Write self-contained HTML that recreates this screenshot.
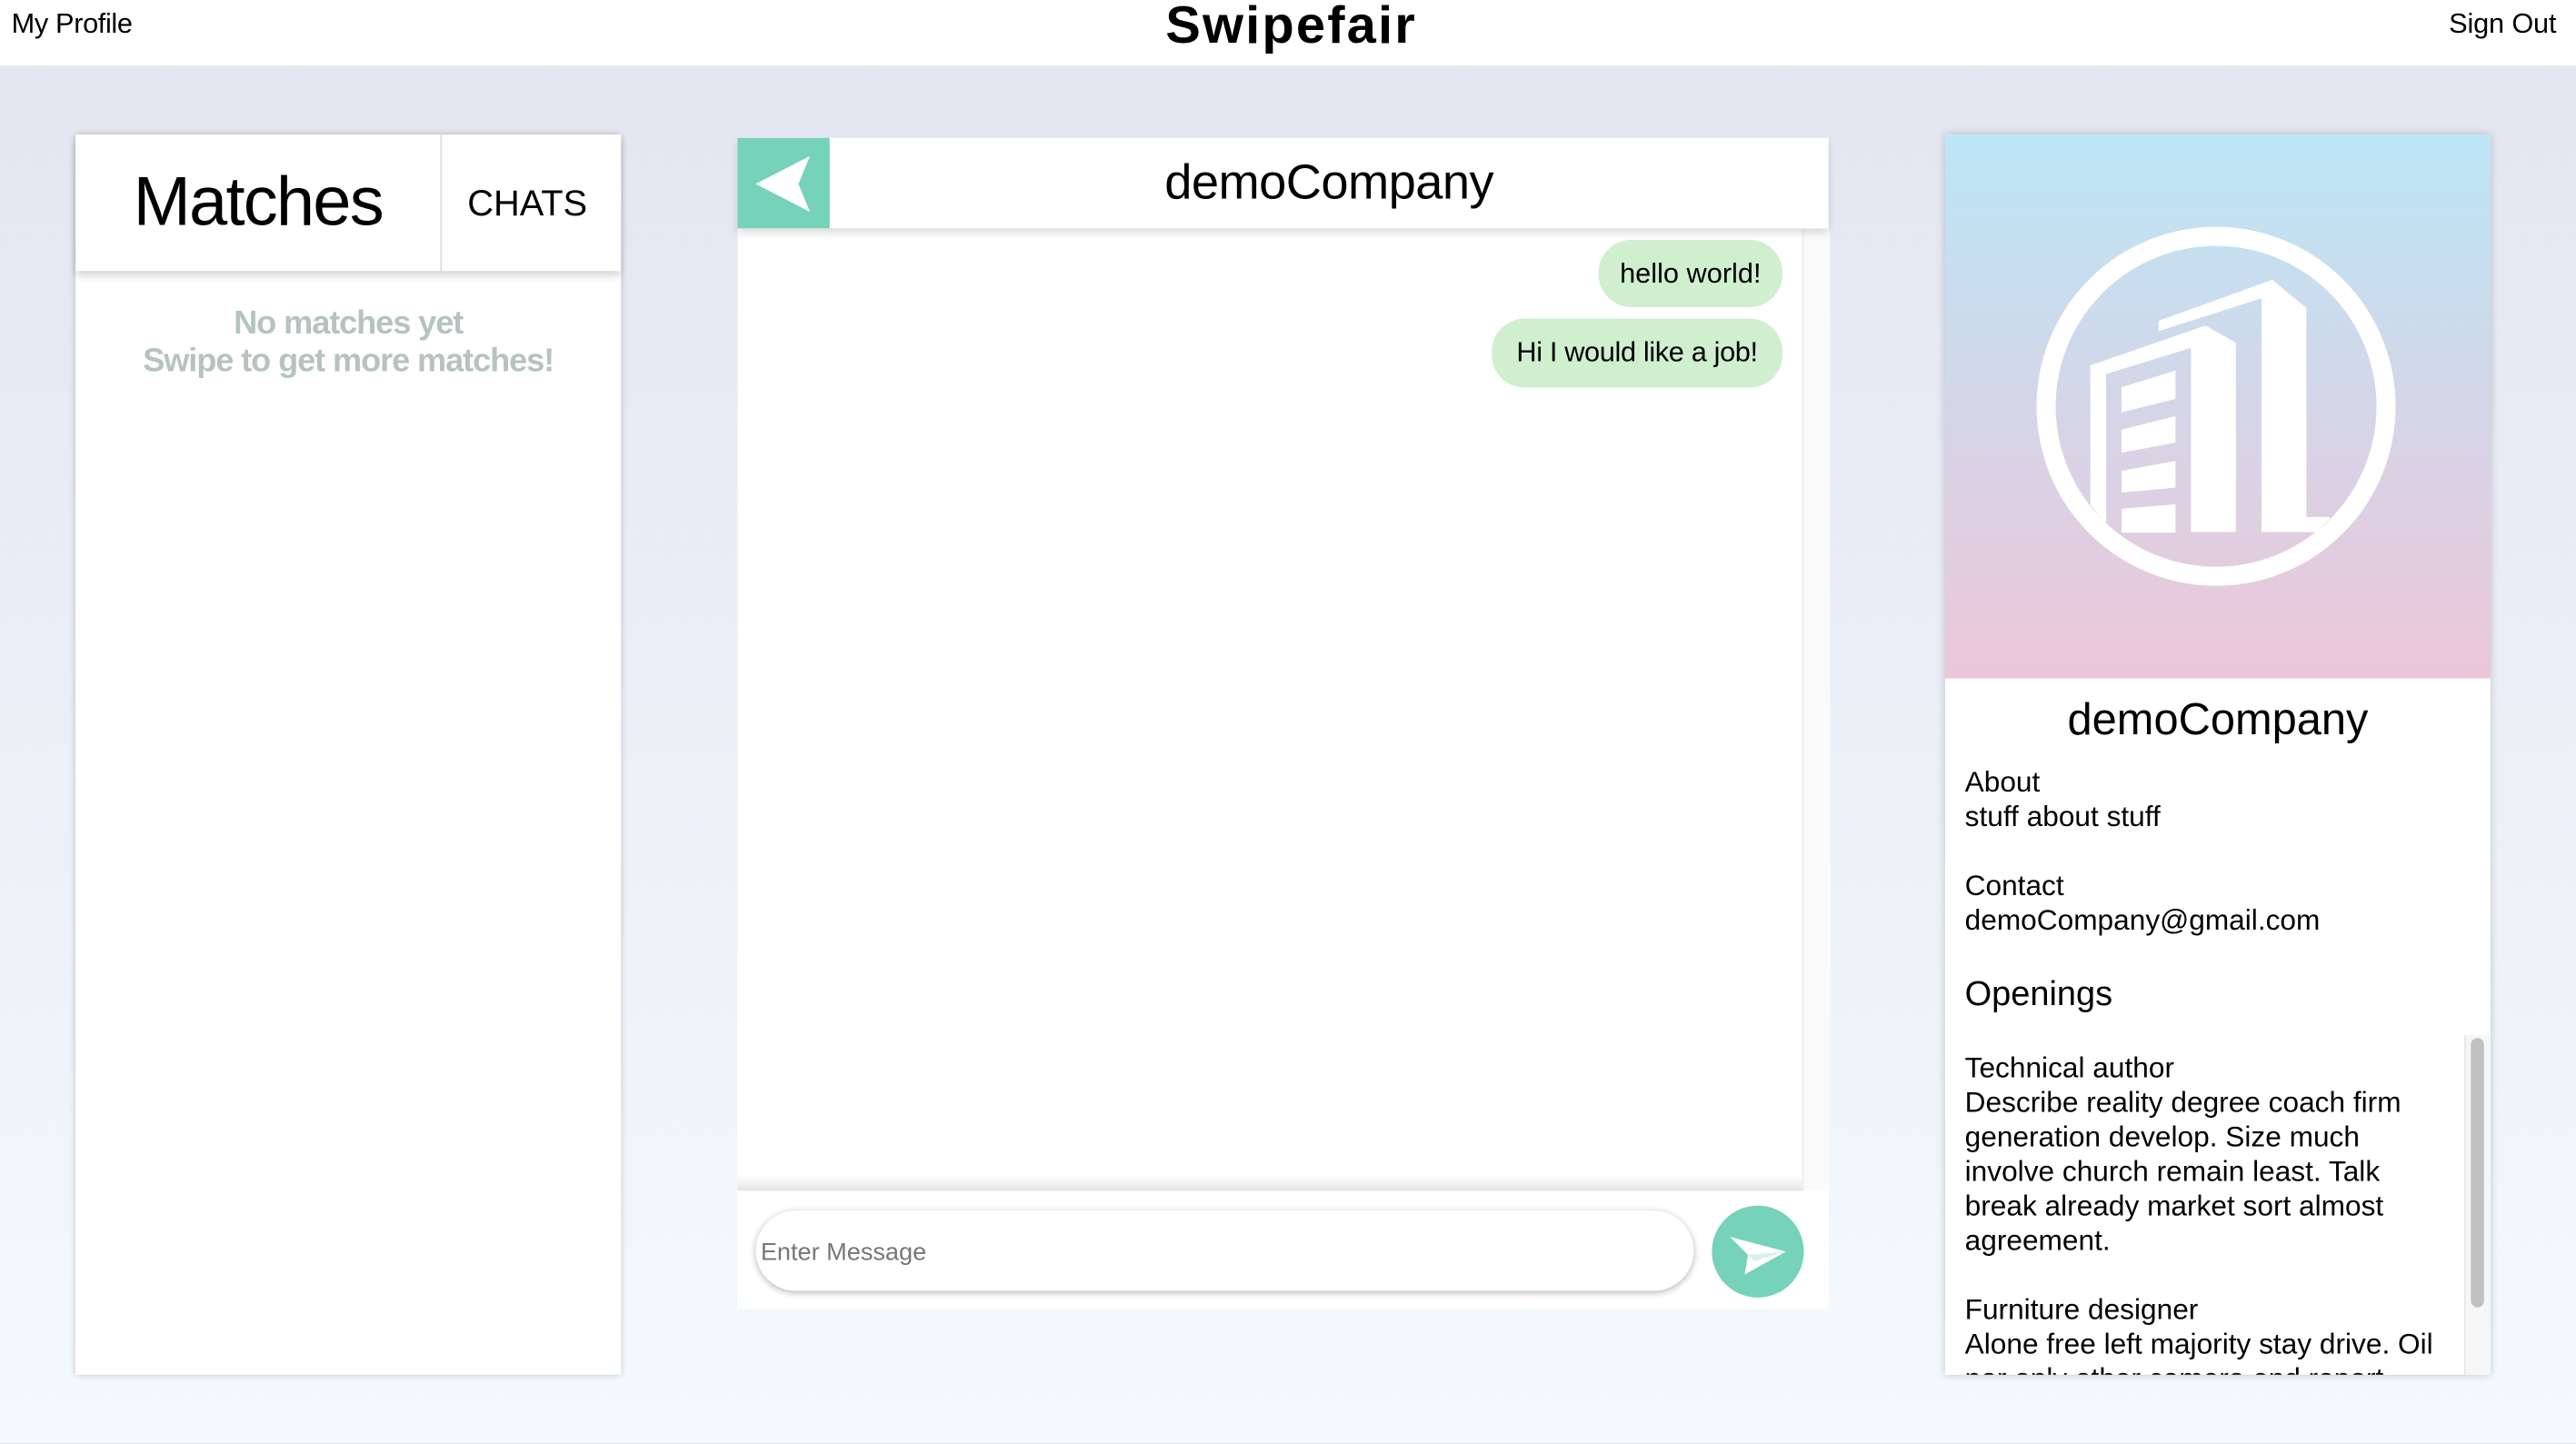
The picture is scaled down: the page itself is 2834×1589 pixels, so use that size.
<!DOCTYPE html>
<html><head><meta charset="utf-8"><style>
html,body{margin:0;padding:0;width:2834px;height:1588px;overflow:hidden;}
body{background:linear-gradient(#e3e4f0 0%,#f3fafd 100%);font-family:"Liberation Sans",sans-serif;}
#s{position:absolute;left:0;top:0;width:1568px;height:879px;transform:scale(1.80740);transform-origin:0 0;}
.a{position:absolute;}
.t{position:absolute;white-space:nowrap;}
</style></head><body><div id="s">
<div class="a" style="left:0;top:0;width:1568px;height:40px;background:#fff"></div>
<div class="t" style="left:7px;top:5px;font-size:17px;letter-spacing:-0.2px">My Profile</div>
<div class="t" style="left:0;width:1572px;text-align:center;top:-3px;font-size:32px;font-weight:900;letter-spacing:1.2px">Swipefair</div>
<div class="t" style="right:12px;top:5px;font-size:17px;letter-spacing:-0.1px">Sign Out</div>

<!-- left panel -->
<div class="a" style="left:46px;top:82px;width:332px;height:755px;background:#fff;box-shadow:0 0 4px rgba(0,0,0,.2)"></div>
<div class="a" style="left:46px;top:82px;width:332px;height:83px;background:#fff;box-shadow:0 3px 5px rgba(0,0,0,.18)"></div>
<div class="a" style="left:268px;top:82px;width:1px;height:83px;background:#ddd"></div>
<div class="t" style="left:46px;width:222px;text-align:center;top:99px;font-size:42px;letter-spacing:-1px">Matches</div>
<div class="t" style="left:268px;width:106px;text-align:center;top:111px;font-size:22px">CHATS</div>
<div class="t" style="left:46px;width:332px;text-align:center;top:186px;font-size:20px;line-height:23px;color:#b5c4bd;font-weight:bold;letter-spacing:-0.6px">No matches yet<br>Swipe to get more matches!</div>

<!-- chat panel -->
<div class="a" style="left:449px;top:84px;width:664px;height:713px;background:#fff"></div>
<div class="a" style="left:1097px;top:140px;width:16px;height:585px;background:#fafafa;border-left:1px solid #eee"></div>
<div class="a" style="left:449px;top:84px;width:664px;height:55px;background:#fff;box-shadow:0 3px 5px rgba(0,0,0,.15)"></div>
<div class="a" style="left:449px;top:84px;width:56px;height:55px;background:#76d3b9"></div>
<svg class="a" style="left:449px;top:84px" width="56" height="55"><polygon points="11,28 44,11 37,28 44,45" fill="#fff"/></svg>
<div class="t" style="left:505px;width:608px;text-align:center;top:95px;font-size:30px;letter-spacing:-0.3px">demoCompany</div>
<div class="t" style="left:973px;top:146px;width:112px;height:41px;line-height:41px;text-align:center;background:#cfefcf;border-radius:20px;font-size:17px">hello world!</div>
<div class="t" style="left:908px;top:194px;width:177px;height:42px;line-height:42px;text-align:center;background:#cfefcf;border-radius:20px;font-size:17px;letter-spacing:-0.2px">Hi I would like a job!</div>
<div class="a" style="left:449px;top:715px;width:648px;height:10px;background:linear-gradient(rgba(0,0,0,0),rgba(0,0,0,.1))"></div>
<div class="a" style="left:460px;top:737px;width:571px;height:49px;border-radius:25px;background:#fff;box-shadow:0 1px 4px rgba(0,0,0,.3)"></div>
<div class="t" style="left:463px;top:754px;font-size:15px;color:#777">Enter Message</div>
<div class="a" style="left:1042px;top:734px;width:56px;height:56px;border-radius:50%;background:#76d3b9"></div>
<svg class="a" style="left:1042px;top:734px" width="56" height="56"><polygon points="11,19 45,28 20,42 22,30" fill="#fff"/><polygon points="22,30 45,28 26,34" fill="#d8f2ea"/></svg>

<!-- right panel -->
<div class="a" style="left:1184px;top:82px;width:332px;height:755px;background:#fff;box-shadow:0 0 5px rgba(0,0,0,.22);overflow:hidden">
 <div class="a" style="left:0;top:0;width:332px;height:331px;background:linear-gradient(#bce6f6,#ecc6d9)"></div>
 <svg class="a" style="left:22.2px;top:39.7px" width="254.5" height="254.5" viewBox="0 0 1380 1380">
  <circle cx="775" cy="680" r="561" fill="none" stroke="#fff" stroke-width="63"/>
  <polygon fill="#fff" points="360,545 740,413 840,470 840,1095 692,1095 692,487 412,573 412,1070 360,1005"/>
  <polygon fill="#fff" points="463,617 641,562 641,655 463,700"/>
  <polygon fill="#fff" points="463,757 641,712 641,800 463,833"/>
  <polygon fill="#fff" points="463,893 641,860 641,948 463,965"/>
  <polygon fill="#fff" points="463,1018 641,1003 641,1097 463,1097"/>
  <polygon fill="#fff" points="585,398 960,262 1073,355 1073,1045 1150,1045 1150,1052 1105,1095 925,1095 925,323 585,432"/>
 </svg>
 <div class="t" style="left:0;width:332px;text-align:center;top:341px;font-size:27px">demoCompany</div>
 <div class="t" style="left:12px;top:384px;font-size:17.5px;line-height:21px">About<br>stuff about stuff<br><br>Contact<br>demoCompany@gmail.com</div>
 <div class="t" style="left:12px;top:512px;font-size:21px">Openings</div>
 <div class="t" style="left:12px;top:558px;font-size:17.5px;line-height:21px">Technical author<br>Describe reality degree coach firm<br>generation develop. Size much<br>involve church remain least. Talk<br>break already market sort almost<br>agreement.<br><br>Furniture designer<br>Alone free left majority stay drive. Oil<br>nor only other camera end report</div>
 <div class="a" style="left:316px;top:548px;width:16px;height:207px;background:#f6f6f6;border-left:1px solid #e6e6e6"></div>
 <div class="a" style="left:320px;top:550px;width:8px;height:164px;border-radius:4px;background:#c1c1c1"></div>
</div>
</div></body></html>
